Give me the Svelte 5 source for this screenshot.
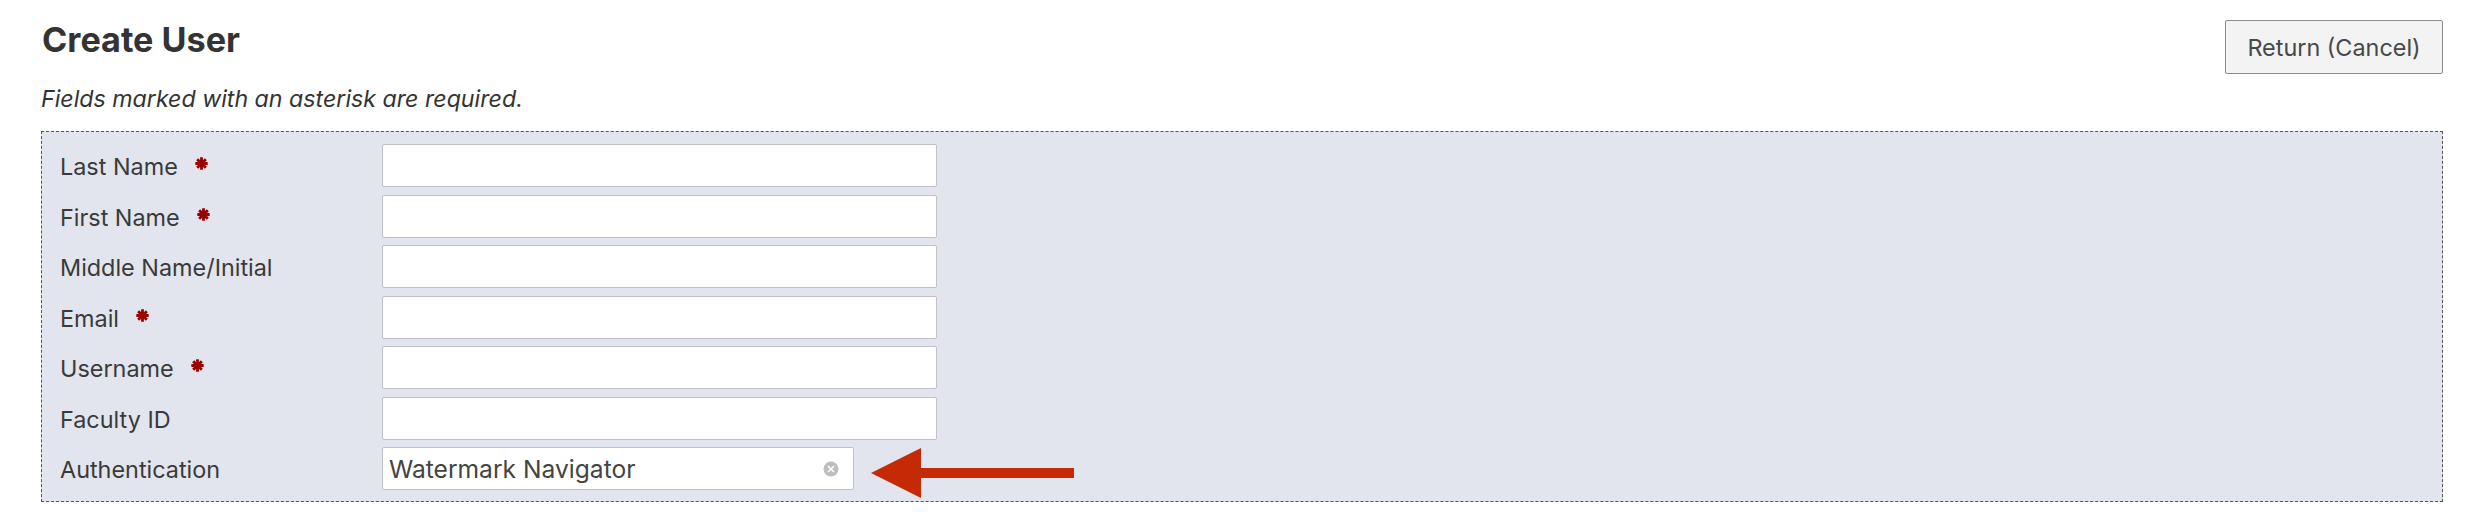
<script>
	const fields = [
		{ label: 'Last Name', required: true },
		{ label: 'First Name', required: true },
		{ label: 'Middle Name/Initial', required: false },
		{ label: 'Email', required: true },
		{ label: 'Username', required: true },
		{ label: 'Faculty ID', required: false }
	];
</script>

<div class="page">
	<div class="top">
		<h1>Create User</h1>
		<button class="return">Return (Cancel)</button>
	</div>
	<p class="note">Fields marked with an asterisk are required.</p>

	<form class="panel">
		{#each fields as field}
			<div class="row">
				<label for={field.label}>
					{field.label}
					{#if field.required}
						<svg class="req" viewBox="0 0 12 12" aria-hidden="true">
							<path d="M6 .3v11.4M.3 6h11.4M2 2l8 8M10 2l-8 8" />
						</svg>
					{/if}
				</label>
				<input id={field.label} type="text" />
			</div>
		{/each}

		<div class="row">
			<label for="auth">Authentication</label>
			<div class="select-wrap">
				<div id="auth" class="select">
					<span>Watermark Navigator</span>
					<svg class="clear" viewBox="0 0 16 16" aria-hidden="true">
						<circle cx="8" cy="8" r="7.5" />
						<path d="M5 5l6 6M11 5l-6 6" />
					</svg>
				</div>
				<svg class="arrow" viewBox="0 0 203 50" aria-hidden="true">
					<path d="M0 25 50 0V20H203V30H50V50Z" />
				</svg>
			</div>
		</div>
	</form>
</div>

<style>
	:global(body) {
		background: #fff;
		color: #333;
		font-family: Inter, 'Liberation Sans', sans-serif;
	}
	.page {
		padding: 20px 27px 30px 41px;
	}
	.top {
		display: flex;
		justify-content: space-between;
		align-items: flex-start;
		height: 54px;
	}
	h1 {
		margin: -1px 0 0 1px;
		font-size: 34.2px;
		font-weight: 700;
		line-height: 42px;
		color: #333;
	}
	.return {
		width: 218px;
		height: 54px;
		background: #f3f3f3;
		border: 1.5px solid #8c8c8c;
		border-radius: 2px;
		color: #484848;
		font: 400 23.4px Inter, 'Liberation Sans', sans-serif;
		padding: 0;
	}
	.note {
		margin: 9px 0 0;
		font-size: 23.2px;
		line-height: 32px;
		font-style: italic;
		color: #333;
	}
	.panel {
		margin-top: 16px;
		height: 371px;
		box-sizing: border-box;
		background: #e2e5ed;
		border: 1.5px dashed #555;
		padding: 12px 18px;
		display: flex;
		flex-direction: column;
		gap: 7.5px;
	}
	.row {
		display: flex;
		align-items: center;
		height: 43px;
	}
	label {
		width: 322px;
		flex: none;
		padding-top: 2px;
		font-size: 23.4px;
		color: #3a3a3a;
		display: flex;
		align-items: center;
		gap: 17px;
	}
	.req {
		width: 13px;
		height: 13px;
		margin-top: -6px;
	}
	.req path {
		stroke: #990000;
		stroke-width: 2.6;
		fill: none;
	}
	input {
		box-sizing: border-box;
		width: 555px;
		height: 43px;
		background: #fff;
		border: 1.5px solid #c0c0c6;
		border-radius: 2px;
		padding: 0 6px;
	}
	.select-wrap {
		display: flex;
		align-items: center;
		gap: 17px;
	}
	.select {
		box-sizing: border-box;
		width: 472px;
		height: 43px;
		background: #fff;
		border: 1.5px solid #c0c0c6;
		border-radius: 2px;
		padding: 0 14px 0 6px;
		display: flex;
		align-items: center;
		justify-content: space-between;
		font-size: 24.6px;
		color: #444;
	}
	.clear {
		width: 16px;
		height: 16px;
	}
	.clear circle {
		fill: #bdbdbd;
	}
	.clear path {
		stroke: #fff;
		stroke-width: 1.6;
		fill: none;
	}
	.arrow {
		width: 203px;
		height: 50px;
		margin-top: 8px;
		fill: #c42a05;
		flex: none;
	}
</style>
